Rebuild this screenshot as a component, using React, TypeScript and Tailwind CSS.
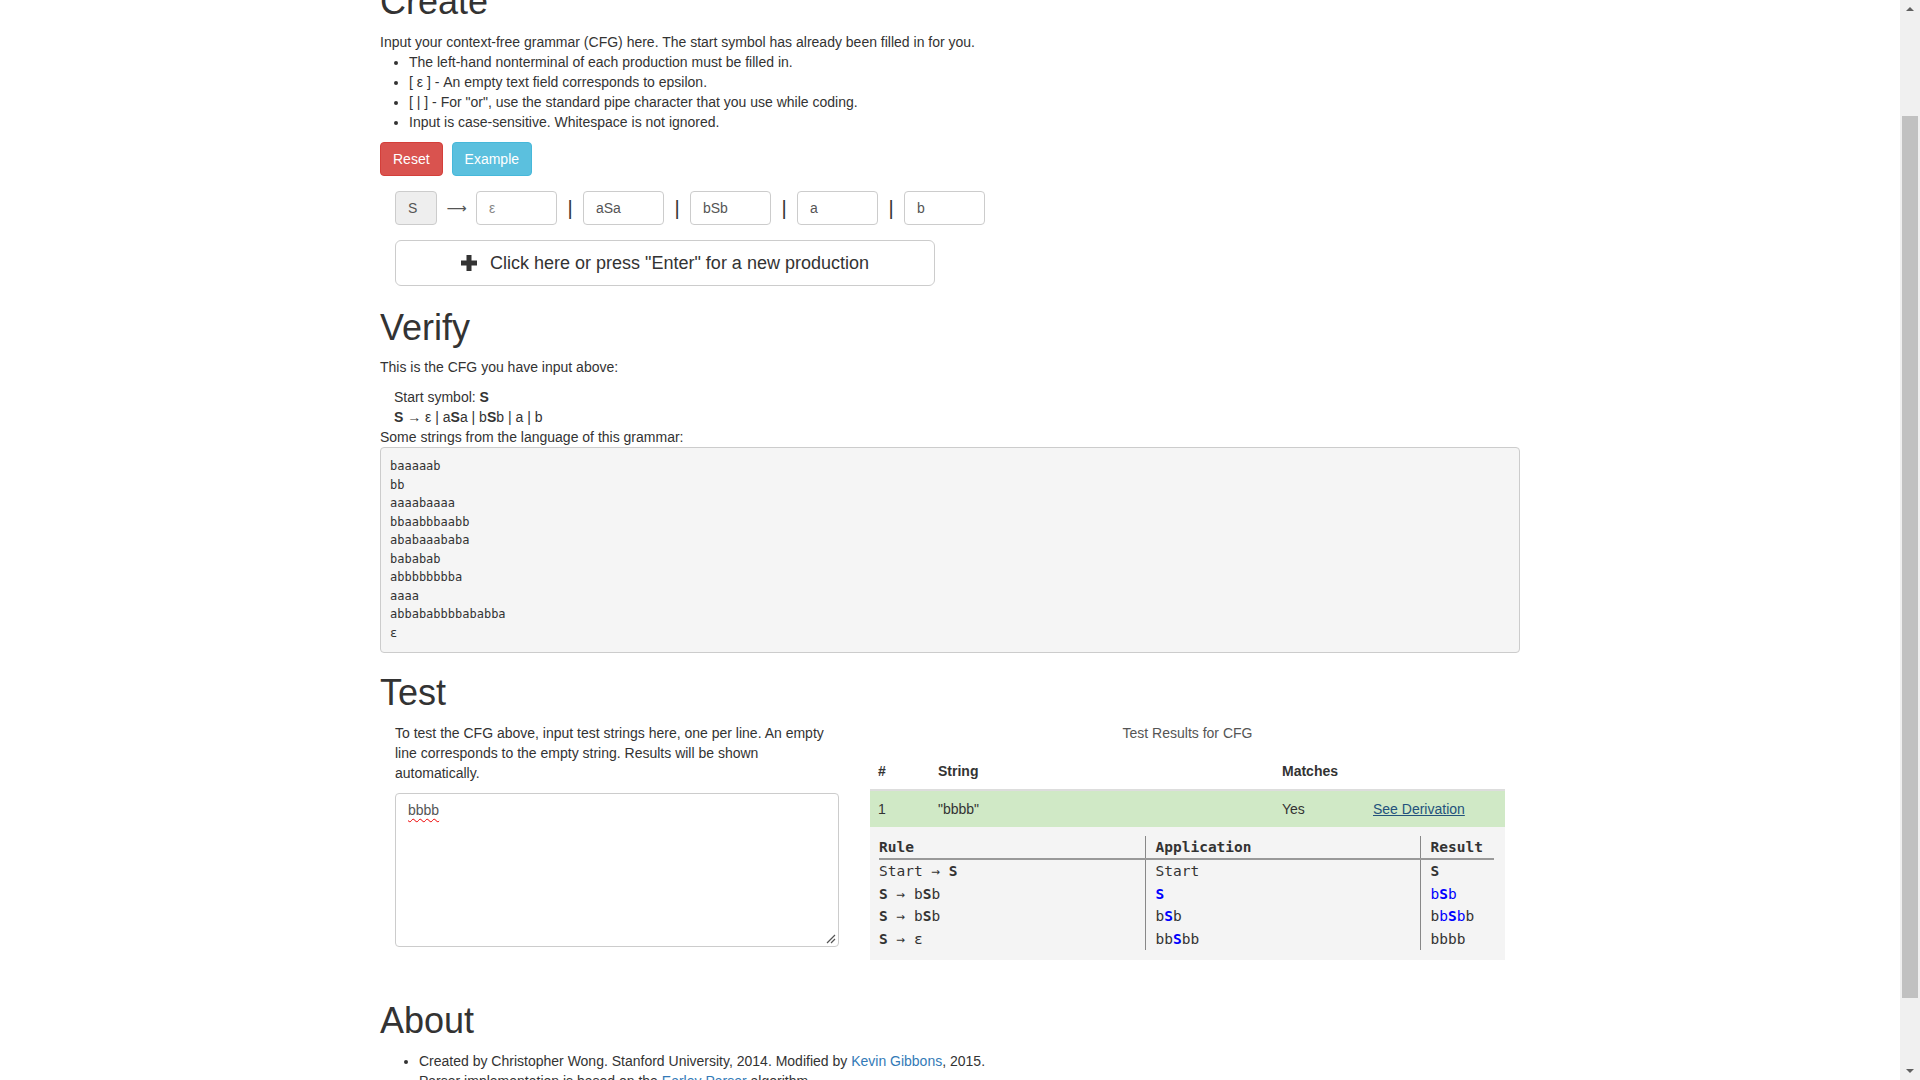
import React from "react";

const BLUE = "text-[#0000ff]";

function PlusIcon() {
  return (
    <svg width="16" height="16" viewBox="0 0 16 16" className="shrink-0">
      <path d="M5.5 0h5v5.5H16v5h-5.5V16h-5v-5.5H0v-5h5.5z" fill="#333" />
    </svg>
  );
}

function ResizeGrip() {
  return (
    <svg width="11" height="11" viewBox="0 0 11 11" className="absolute right-[2px] bottom-[2px]">
      <path d="M10 2L2 10M10 6L6 10" stroke="#555" strokeWidth="1.2" />
    </svg>
  );
}

function Scrollbar() {
  return (
    <div className="w-[20px] h-full bg-[#f0f0f0] flex flex-col items-center shrink-0">
      <div className="h-[17px] w-full flex items-center justify-center">
        <svg width="8" height="5" viewBox="0 0 8 5">
          <path d="M0 5L4 1L8 5z" fill="#606060" />
        </svg>
      </div>
      <div className="mt-[99px] h-[882px] w-[16px] bg-[#c1c1c1]" />
      <div className="flex-1" />
      <div className="h-[17px] w-full flex items-center justify-center">
        <svg width="8" height="5" viewBox="0 0 8 5">
          <path d="M0 0L4 4L8 0z" fill="#606060" />
        </svg>
      </div>
    </div>
  );
}

const rhs = ["", "aSa", "bSb", "a", "b"];
const samples = ["baaaaab", "bb", "aaaabaaaa", "bbaabbbaabb", "ababaaababa", "bababab", "abbbbbbbba", "aaaa", "abbababbbbababba", "ε"];

export default function App() {
  return (
    <div className="h-screen w-full flex overflow-hidden bg-white font-['Liberation_Sans',Arial,sans-serif] text-[14px] leading-[20px] text-[#333]">
      <div className="flex-1 h-full overflow-hidden">
        <div className="w-[1170px] mx-auto px-[15px] -mt-[18px]">
          {/* Create */}
          <h1 className="text-[36px] font-medium leading-[1.1] mb-[10px]">Create</h1>
          <p>Input your context-free grammar (CFG) here. The start symbol has already been filled in for you.</p>
          <ul className="list-disc pl-[29px] mb-[10px]">
            <li>The left-hand nonterminal of each production must be filled in.</li>
            <li>[ ε ] - An empty text field corresponds to epsilon.</li>
            <li>[ | ] - For "or", use the standard pipe character that you use while coding.</li>
            <li>Input is case-sensitive. Whitespace is not ignored.</li>
          </ul>
          <div className="flex gap-[9px]">
            <button className="h-[34px] px-[12px] rounded-[4px] border border-[#d43f3a] bg-[#d9534f] text-white">Reset</button>
            <button className="h-[34px] px-[12px] rounded-[4px] border border-[#46b8da] bg-[#5bc0de] text-white">Example</button>
          </div>

          <div className="mt-[15px] ml-[15px] flex items-center">
            <div className="w-[42px] h-[34px] rounded-[4px] border border-[#ccc] bg-[#eee] pl-[12px] flex items-center text-[#555]">S</div>
            <span className="w-[39px] text-center font-['DejaVu_Sans',sans-serif] text-[14px] text-[#555]">⟶</span>
            {rhs.map((v, i) => (
              <React.Fragment key={i}>
                {i > 0 && <span className="w-[26px] text-center text-[20px] leading-none text-[#333]">|</span>}
                <input
                  readOnly
                  defaultValue={v}
                  placeholder="ε"
                  className="w-[81px] h-[34px] rounded-[4px] border border-[#ccc] bg-white px-[12px] text-[14px] text-[#555] placeholder:text-[#888] outline-none"
                />
              </React.Fragment>
            ))}
          </div>

          <button className="mt-[15px] ml-[15px] w-[540px] h-[46px] rounded-[6px] border border-[#ccc] bg-white flex items-center justify-center gap-[13px] text-[18px] text-[#333]">
            <PlusIcon />
            <span>Click here or press "Enter" for a new production</span>
          </button>

          {/* Verify */}
          <h1 className="mt-[22px] text-[36px] font-medium leading-[1.1] mb-[10px]">Verify</h1>
          <p className="mb-[10px]">This is the CFG you have input above:</p>
          <div className="pl-[14px]">
            <div>
              Start symbol: <b>S</b>
            </div>
            <div>
              <b>S</b> → ε | a<b>S</b>a | b<b>S</b>b | a | b
            </div>
          </div>
          <div>Some strings from the language of this grammar:</div>
          <pre className="h-[206px] rounded-[4px] border border-[#ccc] bg-[#f5f5f5] px-[9px] py-[9px] font-['DejaVu_Sans_Mono',monospace] text-[12px] leading-[18.5px] text-[#333]">
            {samples.map((s) => (
              <div key={s}>{s}</div>
            ))}
          </pre>

          {/* Test */}
          <h1 className="mt-[20px] text-[36px] font-medium leading-[1.1] mb-[10px]">Test</h1>
          <div className="mt-[2px] flex gap-[31px] pl-[15px]">
            <div className="w-[444px] shrink-0">
              <p className="mb-[10px]">
                To test the CFG above, input test strings here, one per line. An empty line corresponds to the empty string. Results will be shown automatically.
              </p>
              <div className="relative h-[154px] rounded-[4px] border border-[#ccc] bg-white px-[12px] py-[6px] text-[#555]">
                <span className="underline decoration-wavy decoration-[#e00] decoration-1 underline-offset-[3px]">bbbb</span>
                <ResizeGrip />
              </div>
            </div>

            <div className="w-[635px] shrink-0">
              <div className="text-center text-[#555] pb-[10px]">Test Results for CFG</div>
              <table className="w-full table-fixed border-collapse">
                <colgroup>
                  <col className="w-[60px]" />
                  <col />
                  <col className="w-[91px]" />
                  <col className="w-[140px]" />
                </colgroup>
                <thead>
                  <tr className="border-b-2 border-[#ddd] text-left">
                    <th className="p-[8px] font-bold">#</th>
                    <th className="p-[8px] font-bold">String</th>
                    <th className="p-[8px] font-bold">Matches</th>
                    <th className="p-[8px]"></th>
                  </tr>
                </thead>
                <tbody>
                  <tr className="bg-[#d0e9c6]">
                    <td className="p-[8px]">1</td>
                    <td className="p-[8px]">"bbbb"</td>
                    <td className="p-[8px]">Yes</td>
                    <td className="p-[8px]">
                      <a className="text-[#23527c] underline">See Derivation</a>
                    </td>
                  </tr>
                </tbody>
              </table>
              <div className="bg-[#f4f4f4] pl-[9px] pt-[9px] pb-[10px]">
                <table className="w-[615px] table-fixed border-collapse font-['DejaVu_Sans_Mono',monospace] text-[14.5px] leading-[22.5px] text-[#333]">
                  <colgroup>
                    <col className="w-[266px]" />
                    <col className="w-[275px]" />
                    <col className="w-[74px]" />
                  </colgroup>
                  <thead>
                    <tr className="border-b-2 border-[#999] text-left">
                      <th className="font-bold">Rule</th>
                      <th className="pl-[10px] border-l border-[#888] font-bold">Application</th>
                      <th className="pl-[10px] border-l border-[#888] font-bold">Result</th>
                    </tr>
                  </thead>
                  <tbody>
                    <tr>
                      <td>
                        Start → <b>S</b>
                      </td>
                      <td className="pl-[10px] border-l border-[#888]">Start</td>
                      <td className="pl-[10px] border-l border-[#888]">
                        <b>S</b>
                      </td>
                    </tr>
                    <tr>
                      <td>
                        <b>S</b> → b<b>S</b>b
                      </td>
                      <td className="pl-[10px] border-l border-[#888]">
                        <b className={BLUE}>S</b>
                      </td>
                      <td className={`pl-[10px] border-l border-[#888] ${BLUE}`}>
                        b<b>S</b>b
                      </td>
                    </tr>
                    <tr>
                      <td>
                        <b>S</b> → b<b>S</b>b
                      </td>
                      <td className="pl-[10px] border-l border-[#888]">
                        b<b className={BLUE}>S</b>b
                      </td>
                      <td className="pl-[10px] border-l border-[#888]">
                        b<span className={BLUE}>b<b>S</b>b</span>b
                      </td>
                    </tr>
                    <tr>
                      <td>
                        <b>S</b> → ε
                      </td>
                      <td className="pl-[10px] border-l border-[#888]">
                        bb<b className={BLUE}>S</b>bb
                      </td>
                      <td className="pl-[10px] border-l border-[#888]">bbbb</td>
                    </tr>
                  </tbody>
                </table>
              </div>
            </div>
          </div>

          {/* About */}
          <h1 className="mt-[41px] text-[36px] font-medium leading-[1.1] mb-[10px]">About</h1>
          <ul className="list-disc pl-[39px]">
            <li>
              Created by Christopher Wong. Stanford University, 2014. Modified by <a className="text-[#337ab7]">Kevin Gibbons</a>, 2015.
            </li>
            <li>
              Parser implementation is based on the <a className="text-[#337ab7]">Earley Parser</a> algorithm.
            </li>
          </ul>
        </div>
      </div>
      <Scrollbar />
    </div>
  );
}
